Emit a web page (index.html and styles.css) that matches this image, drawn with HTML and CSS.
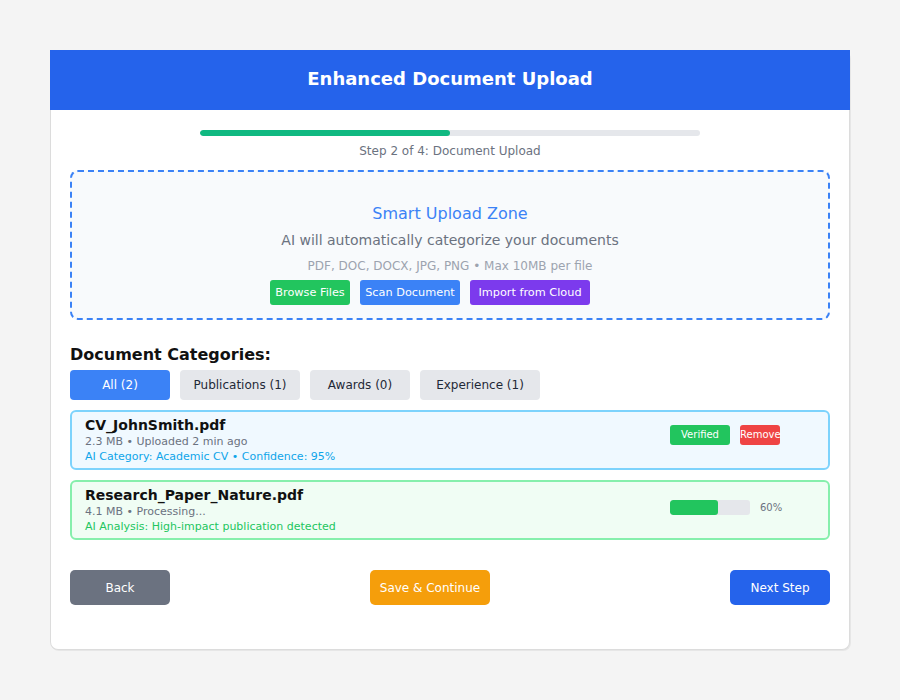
FILE: index.html
```html
<!DOCTYPE html>
<html lang="en">
<head>
<meta charset="utf-8">
<title>Enhanced Document Upload</title>
<link rel="stylesheet" href="styles.css">
</head>
<body>
<div class="card">
  <div class="header"><h1>Enhanced Document Upload</h1></div>
  <div class="content">
    <div class="progress"><div class="progress-fill" style="width:50%"></div></div>
    <div class="step">Step 2 of 4: Document Upload</div>

    <div class="zone">
      <div class="zone-title">Smart Upload Zone</div>
      <div class="zone-sub">AI will automatically categorize your documents</div>
      <div class="zone-formats">PDF, DOC, DOCX, JPG, PNG • Max 10MB per file</div>
      <div class="zone-actions">
        <button class="zbtn zbtn-green">Browse Files</button>
        <button class="zbtn zbtn-blue">Scan Document</button>
        <button class="zbtn zbtn-purple">Import from Cloud</button>
      </div>
    </div>

    <h2 class="cat-title">Document Categories:</h2>
    <div class="tabs">
      <button class="tab tab-active tab-sm">All (2)</button>
      <button class="tab">Publications (1)</button>
      <button class="tab tab-sm">Awards (0)</button>
      <button class="tab">Experience (1)</button>
    </div>

    <div class="files">
      <div class="file file-blue">
        <div class="file-info">
          <div class="file-name">CV_JohnSmith.pdf</div>
          <div class="file-meta">2.3 MB • Uploaded 2 min ago</div>
          <div class="file-ai ai-blue">AI Category: Academic CV • Confidence: 95%</div>
        </div>
        <div class="file-side side-up">
          <span class="badge badge-green">Verified</span>
          <span class="badge badge-red">Remove</span>
        </div>
      </div>
      <div class="file file-green">
        <div class="file-info">
          <div class="file-name">Research_Paper_Nature.pdf</div>
          <div class="file-meta">4.1 MB • Processing...</div>
          <div class="file-ai ai-green">AI Analysis: High-impact publication detected</div>
        </div>
        <div class="file-side side-mid">
          <div class="mini-bar"><div class="mini-fill" style="width:60%"></div></div>
          <span class="pct">60%</span>
        </div>
      </div>
    </div>

    <div class="footer">
      <button class="fbtn fbtn-gray">Back</button>
      <button class="fbtn fbtn-amber">Save &amp; Continue</button>
      <button class="fbtn fbtn-blue">Next Step</button>
    </div>
  </div>
</div>
</body>
</html>
```

FILE: styles.css
```css
* { box-sizing: border-box; }
html, body { margin: 0; }
body {
  background: #f4f4f4;
  padding: 50px;
  font-family: "DejaVu Sans", "Liberation Sans", sans-serif;
  color: #111;
}
button { font-family: inherit; border: none; cursor: pointer; }

.card {
  width: 800px;
  height: 600px;
  background: #fff;
  border: 1px solid #dcdcdc;
  border-top: none;
  border-radius: 8px;
  box-shadow: 1px 1px 0 #e6e6e6;
}
.header {
  height: 60px;
  margin: 0 -1px;
  background: #2563eb;
  display: flex;
  align-items: center;
  justify-content: center;
  padding-bottom: 4px;
}
.header h1 {
  margin: 0;
  color: #fff;
  font-size: 18px;
  font-weight: bold;
}
.content { padding: 20px 19px 0; }

.progress {
  width: 500px;
  height: 6px;
  margin: 0 auto;
  background: #e5e7eb;
  border-radius: 3px;
  overflow: hidden;
}
.progress-fill { height: 100%; background: #10b981; border-radius: 3px; }
.step {
  margin-top: 7px;
  text-align: center;
  font-size: 12px;
  line-height: 16px;
  color: #6b7280;
}

.zone {
  margin-top: 11px;
  height: 150px;
  border: 2px dashed #3b82f6;
  border-radius: 8px;
  background: #f8fafc;
  padding: 31px 20px 0;
  text-align: center;
}
.zone-title { font-size: 16px; line-height: 22px; color: #3b82f6; }
.zone-sub { margin-top: 6px; font-size: 14px; line-height: 18px; color: #6b7280; }
.zone-formats { margin-top: 9px; font-size: 12px; line-height: 16px; color: #9ca3af; }
.zone-actions {
  margin-top: 6px;
  display: flex;
  justify-content: center;
  gap: 10px;
  padding-right: 40px;
}
.zbtn {
  height: 25px;
  padding: 0;
  border-radius: 3px;
  color: #fff;
  font-size: 11.3px;
}
.zbtn-green { width: 80px; background: #22c55e; }
.zbtn-blue { width: 100px; background: #3b82f6; }
.zbtn-purple { width: 120px; background: #7c3aed; }

.cat-title {
  margin: 25px 0 0;
  font-size: 16px;
  line-height: 20px;
  font-weight: bold;
  color: #111;
}
.tabs { margin-top: 5px; display: flex; gap: 10px; }
.tab {
  width: 120px;
  height: 30px;
  padding: 0;
  border-radius: 4px;
  background: #e5e7eb;
  color: #1f2937;
  font-size: 12px;
}
.tab-sm { width: 100px; }
.tab-active { background: #3b82f6; color: #fff; }

.files { margin-top: 10px; display: flex; flex-direction: column; gap: 10px; }
.file {
  height: 60px;
  border: 2px solid;
  border-radius: 6px;
  padding: 4px 13px 0;
  display: flex;
}
.file-blue { background: #f0f9ff; border-color: #7dd3fc; }
.file-green { background: #f0fdf4; border-color: #86efac; }
.file-info { flex: 1; }
.file-name { font-size: 14px; line-height: 19px; font-weight: bold; color: #111; }
.file-meta { font-size: 11px; line-height: 14px; color: #6b7280; }
.file-ai { margin-top: 1px; font-size: 11px; line-height: 14px; }
.ai-blue { color: #0ea5e9; }
.ai-green { color: #22c55e; }

.file-side { width: 145px; display: flex; align-items: center; gap: 10px; align-self: flex-start; }
.side-up { margin-top: 9px; }
.side-mid { margin-top: 14px; }
.badge {
  height: 20px;
  line-height: 20px;
  border-radius: 3px;
  color: #fff;
  font-size: 10px;
  text-align: center;
}
.badge-green { width: 60px; background: #22c55e; }
.badge-red { width: 40px; background: #ef4444; }
.mini-bar { width: 80px; height: 15px; background: #e5e7eb; border-radius: 3px; overflow: hidden; }
.mini-fill { height: 100%; background: #22c55e; border-radius: 3px; }
.pct { font-size: 10px; color: #6b7280; }

.footer { margin-top: 30px; display: flex; justify-content: space-between; }
.fbtn {
  height: 35px;
  padding: 0;
  border-radius: 5px;
  color: #fff;
  font-size: 12px;
}
.fbtn-gray { width: 100px; background: #6b7280; }
.fbtn-amber { width: 120px; background: #f59e0b; margin-right: 40px; }
.fbtn-blue { width: 100px; background: #2563eb; }
```
